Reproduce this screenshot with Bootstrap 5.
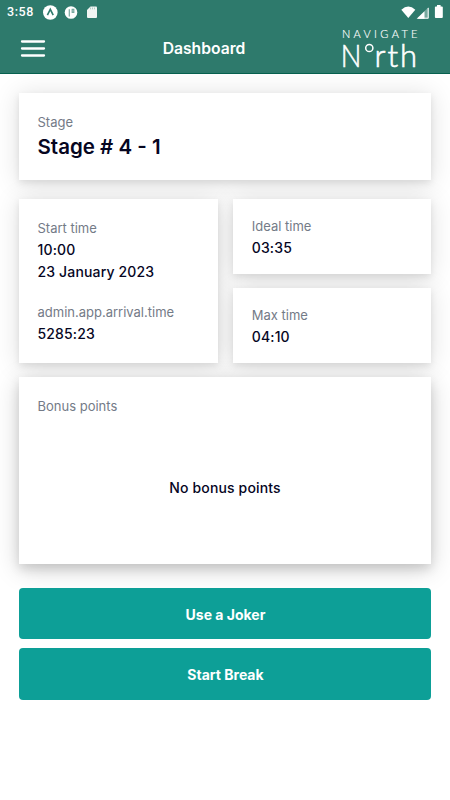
<!DOCTYPE html>
<html lang="en">
<head>
<meta charset="utf-8">
<meta name="viewport" content="width=device-width, initial-scale=1">
<title>Dashboard</title>
<link href="https://cdn.jsdelivr.net/npm/bootstrap@5.3.0/dist/css/bootstrap.min.css" rel="stylesheet">
<style>
body { font-family: Inter, sans-serif; background: #fff; color: #06061f; }
.app { width: 450px; height: 800px; }
.topbar { height: 74px; background: #2e7a6c; border-bottom: 1px solid #07614f; }
.statusbar { height: 23px; padding: 0 6px 0 7px; }
.clock { font: 500 12.5px/23px Roboto, sans-serif; width: 36px; letter-spacing: .55px; }
.titlebar { height: 50px; }
.side { width: 110px; }
.menu-btn { padding: 0 0 0 20px; }
.title { font-size: 15.7px; font-weight: 600; line-height: 50px; padding: 1px 42px 0 0; }
.content { padding: 19px 19px 0; }
.panel-group { isolation: isolate; }
.panel { position: relative; background: #fff; padding: 0 18.5px; }
.panel::before { content: ""; position: absolute; inset: 0; z-index: -1; box-shadow: 0 3px 7px rgba(0,0,0,.09), 0 2px 24px 1px rgba(0,0,0,.12); }
.panel-deep::before { box-shadow: 0 5px 10px rgba(0,0,0,.12), 0 5px 24px rgba(0,0,0,.18); }
.panel-stage { height: 87px; padding-top: 18px; margin-bottom: 18.5px; }
.times { gap: 15px; margin-bottom: 14px; height: 164px; }
.panel-start { padding-top: 18px; }
.panel-half { height: 75px; padding-top: 16.5px; }
.panel-bonus { height: 187.5px; padding-top: 18px; }
.caption { font-size: 13px; line-height: 22px; color: #747b87; }
.value { font-size: 14px; line-height: 22.3px; font-weight: 500; letter-spacing: .15px; }
.panel-start .caption + .value { padding-top: .3px; }
.value-lg { font-size: 20.5px; line-height: 27px; font-weight: 600; }
.arrival { margin-top: 17.5px; }
.empty { margin-top: 60px; }
.actions { position: relative; margin-top: 23.5px; gap: 9.5px; }
.action-btn { --bs-btn-color: #fff; --bs-btn-bg: #0d9f97; --bs-btn-hover-color: #fff; --bs-btn-hover-bg: #0b8c85; --bs-btn-border-width: 0; --bs-btn-padding-x: 0; height: 51.3px; padding: 8px 0 6px 1px; border-radius: 4px; font-size: 14px; font-weight: 700; }
</style>
</head>
<body>
<div class="app d-flex flex-column overflow-hidden">
  <header class="topbar text-white flex-shrink-0">
    <div class="statusbar d-flex align-items-center">
      <span class="clock">3:58</span>
      <svg width="56" height="16" viewBox="43 3 56 16">
        <circle cx="50.3" cy="11.500" r="7.300" fill="#fff"/>
        <path d="M47.400 14.200 50.300 8.400l2.900 5.800" fill="none" stroke="#2e7a6c" stroke-width="1.600"/>
        <circle cx="71" cy="11.500" r="6.300" fill="#fff"/>
        <path d="M69.300 15.500V8.200M72.200 8.400h1.600v3h-1.600z" fill="none" stroke="#2e7a6c" stroke-opacity=".65" stroke-width="1.200"/>
        <path d="M90.500 5.400h5.500a1 1 0 0 1 1 1v9.600a1 1 0 0 1-1 1h-8a1 1 0 0 1-1-1V9z" fill="#f1f5f3"/>
        <path d="M90.500 6.500v1.800M92.500 6.500v1.800M94.500 6.500v1.800" stroke="#2e7a6c" stroke-opacity=".4" stroke-width=".8"/>
      </svg>
      <svg class="ms-auto" width="44" height="16" viewBox="400 2 44 16">
        <path d="M401.300 7.800q7-6.400 14 0L408.300 16z" fill="#fff"/>
        <path d="M428.700 5v11.700h-12z" fill="#fff" fill-opacity=".35"/>
        <path d="M424.500 9.200v7.500h-7.800z" fill="#fff"/>
        <path d="M428.200 6v10.200h-10" fill="none" stroke="#fff" stroke-width="1"/>
        <path d="M437 4.800V3.500h3.600v1.300h1.300a.9.900 0 0 1 .9.900v9.700a.9.900 0 0 1-.9.900h-6.100a.9.900 0 0 1-.9-.9V5.700a.9.900 0 0 1 .9-.9z" fill="#fff" transform="translate(0 -.4)"/>
      </svg>
    </div>
    <div class="titlebar d-flex align-items-center justify-content-between">
      <div class="side">
        <button class="menu-btn btn border-0 d-block" type="button" aria-label="Menu">
          <svg class="d-block" width="26" height="20" viewBox="0 0 26 20"><path d="M2 3.500h22M2 10.500h22M2 17.500h22" stroke="#fff" stroke-width="2.300" stroke-linecap="round"/></svg>
        </button>
      </div>
      <h1 class="title m-0 flex-fill text-center">Dashboard</h1>
      <svg class="flex-shrink-0" width="110" height="50" viewBox="340 23 110 50" fill="#fff" font-family="Lato, sans-serif" font-weight="300">
        <text x="342" y="37.500" font-size="11" textLength="75.500" stroke="#fff" stroke-width=".15">NAVIGATE</text>
        <g font-size="31" stroke="#fff" stroke-width=".6">
          <text transform="translate(340.800 66.800) scale(.88 1)">N</text>
          <circle cx="369.300" cy="48" r="3.600" fill="none" stroke-width="1.500"/>
          <text x="374.500 387.500 400" y="66.800">rth</text>
        </g>
      </svg>
    </div>
  </header>
  <main class="content">
    <div class="panel-group">
      <section class="panel panel-stage">
        <div class="caption">Stage</div>
        <div class="value-lg">Stage # 4 - 1</div>
      </section>
      <div class="times d-flex">
        <section class="panel panel-start w-50">
          <div class="caption">Start time</div>
          <div class="value">10:00</div>
          <div class="value">23 January 2023</div>
          <div class="caption arrival">admin.app.arrival.time</div>
          <div class="value">5285:23</div>
        </section>
        <div class="w-50 d-flex flex-column justify-content-between">
          <section class="panel panel-half">
            <div class="caption">Ideal time</div>
            <div class="value">03:35</div>
          </section>
          <section class="panel panel-half">
            <div class="caption">Max time</div>
            <div class="value">04:10</div>
          </section>
        </div>
      </div>
      <section class="panel panel-deep panel-bonus">
        <div class="caption">Bonus points</div>
        <div class="value empty text-center">No bonus points</div>
      </section>
    </div>
    <div class="actions d-grid">
      <button class="btn action-btn" type="button">Use a Joker</button>
      <button class="btn action-btn" type="button">Start Break</button>
    </div>
  </main>
</div>
<script src="https://cdn.jsdelivr.net/npm/bootstrap@5.3.0/dist/js/bootstrap.bundle.min.js"></script>
</body>
</html>
